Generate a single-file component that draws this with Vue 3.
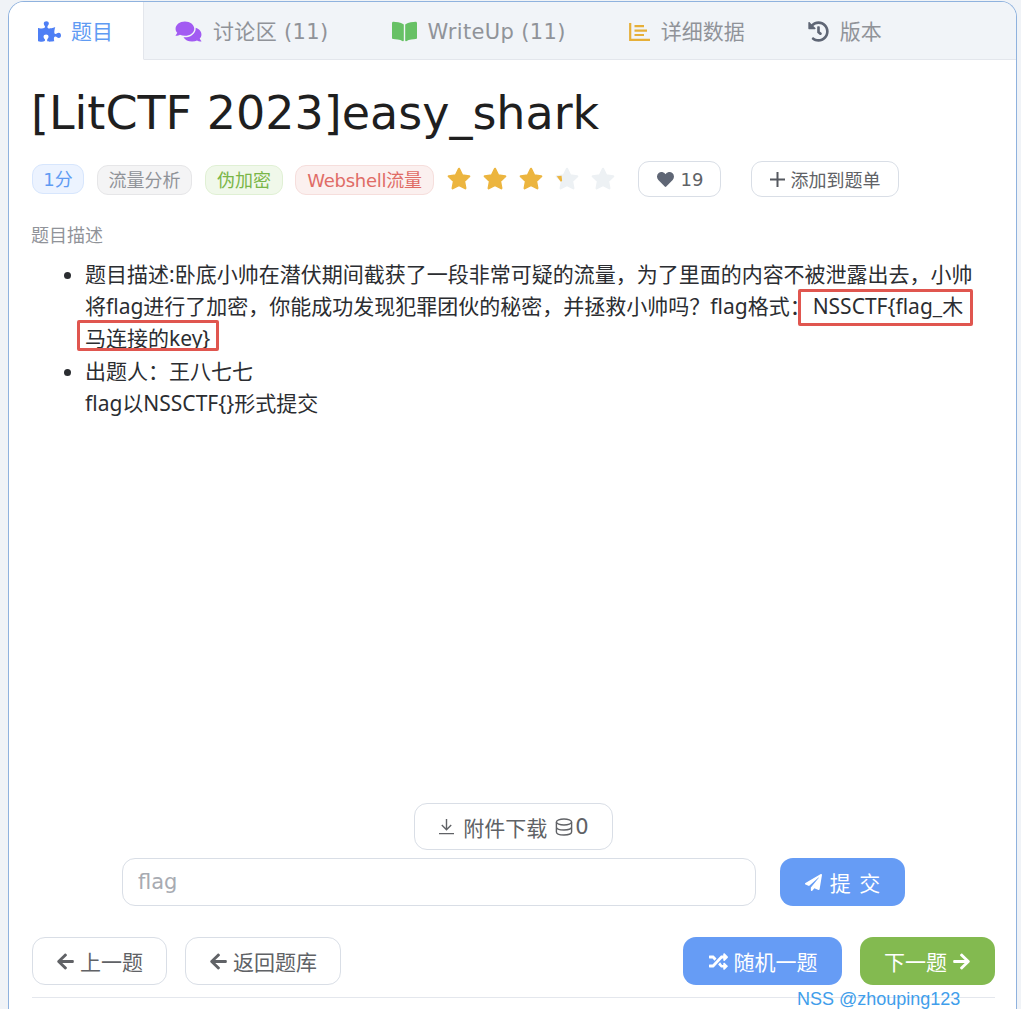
<script setup>
const d = {
  puzzle: 'M519.442 288.651c-41.519 0-59.5 31.593-82.058 31.593C377.409 320.244 432 144 432 144s-196.288 80-196.288-3.297c0-35.827 36.288-46.25 36.288-85.985C272 19.216 243.885 0 210.539 0c-34.654 0-66.366 18.891-66.366 56.346 0 41.364 31.711 59.277 31.711 81.75C175.885 207.719 0 166.758 0 166.758v333.237s178.635 41.047 178.635-28.662c0-22.473-40-40.107-40-81.471 0-37.456 29.25-56.346 63.577-56.346 33.673 0 61.788 19.216 61.788 54.717 0 39.735-36.288 50.158-36.288 85.985 0 60.803 129.675 25.73 181.23 25.73 0 0-34.725-120.101 25.827-120.101 35.962 0 46.423 36.152 86.308 36.152C556.712 416 576 387.99 576 354.443c0-34.199-18.962-65.792-56.558-65.792z',
  comments: 'M416 192c0-88.4-93.1-160-208-160S0 103.6 0 192c0 34.3 14.1 65.9 38 92-13.4 30.2-35.5 54.2-35.8 54.5-2.2 2.3-2.8 5.7-1.5 8.7S4.8 352 8 352c36.6 0 66.9-12.3 88.7-25 32.2 15.7 70.3 25 111.3 25 114.9 0 208-71.6 208-160zm122 220c23.9-26 38-57.7 38-92 0-66.9-53.5-124.2-129.3-148.1.9 6.6 1.3 13.3 1.3 20.1 0 105.9-107.7 192-240 192-10.8 0-21.3-.8-31.7-1.9C207.8 439.6 281.8 480 368 480c41 0 79.1-9.2 111.3-25 21.8 12.7 52.1 25 88.7 25 3.2 0 6.1-1.9 7.3-4.8 1.3-2.9.7-6.3-1.5-8.7-.3-.3-22.4-24.2-35.8-54.5z',
  book: 'M542.22 32.05c-54.8 3.11-163.72 14.43-230.96 55.59-4.64 2.84-7.27 7.89-7.27 13.17v363.87c0 11.55 12.63 18.85 23.28 13.49 69.18-34.82 169.23-44.32 218.7-46.92 16.89-.89 30.02-14.43 30.02-30.66V62.75c.01-17.71-15.35-31.74-33.77-30.7zM264.73 87.64C197.5 46.48 88.58 35.17 33.78 32.05 15.36 31.01 0 45.04 0 62.75V400.6c0 16.24 13.13 29.78 30.02 30.66 49.49 2.6 149.59 12.11 218.77 46.95 10.62 5.35 23.21-1.94 23.21-13.46V100.63c0-5.29-2.62-10.14-7.27-12.99z',
  history: 'M504 255.531c.253 136.64-111.18 248.372-247.82 248.468-59.015.042-113.223-20.53-155.822-54.911-11.077-8.94-11.905-25.541-1.839-35.607l11.267-11.267c8.609-8.609 22.353-9.551 31.891-1.984C173.062 425.135 212.781 440 256 440c101.705 0 184-82.311 184-184 0-101.705-82.311-184-184-184-48.814 0-93.149 18.969-126.068 49.932l50.754 50.754c10.08 10.08 2.941 27.314-11.313 27.314H24c-8.837 0-16-7.163-16-16V38.627c0-14.254 17.234-21.393 27.314-11.314l49.372 49.372C129.209 34.136 189.552 8 256 8c136.81 0 247.747 110.78 248 247.531zm-180.912 78.784l9.823-12.63c8.138-10.463 6.253-25.542-4.21-33.679L288 256.349V152c0-13.255-10.745-24-24-24h-16c-13.255 0-24 10.745-24 24v135.651l65.409 50.874c10.463 8.137 25.541 6.253 33.679-4.21z',
  heart: 'M462.3 62.6C407.5 15.9 326 24.3 275.7 76.2L256 96.5l-19.7-20.3C186.1 24.3 104.5 15.9 49.7 62.6c-62.8 53.6-66.1 149.8-9.9 207.9l193.5 199.8c12.5 12.9 32.8 12.9 45.3 0l193.5-199.8c56.3-58.1 53-154.3-9.8-207.9z',
  plane: 'M476 3.2L12.5 270.6c-18.1 10.4-15.8 35.6 2.2 43.2L121 358.4l287.3-253.2c5.5-4.9 13.3 2.6 8.6 8.3L176 407v80.5c0 23.6 28.5 32.9 42.5 15.8L282 426l124.6 52.2c14.2 6 30.4-2.9 33-18.2l72-432C515 7.8 493.3-6.8 476 3.2z',
  random: 'M504.971 359.029c9.373 9.373 9.373 24.569 0 33.941l-80 79.984c-15.01 15.01-40.971 4.49-40.971-16.971V416h-58.785a12.004 12.004 0 0 1-8.773-3.812l-70.556-75.596 53.333-57.143L352 352h32v-39.981c0-21.438 25.943-31.998 40.971-16.971l80 79.981zM12 176h84l52.781 56.551 53.333-57.143-70.556-75.596A11.999 11.999 0 0 0 122.785 96H12c-6.627 0-12 5.373-12 12v56c0 6.627 5.373 12 12 12zm372 0v39.984c0 21.46 25.961 31.98 40.971 16.971l80-79.984c9.373-9.373 9.373-24.569 0-33.941l-80-79.981C409.943 24.021 384 34.582 384 56.019V96h-58.785a12.004 12.004 0 0 0-8.773 3.812L96 336H12c-6.627 0-12 5.373-12 12v56c0 6.627 5.373 12 12 12h110.785c3.326 0 6.503-1.381 8.773-3.812L352 176h32z',
  left: 'M257.5 445.1l-22.2 22.2c-9.4 9.4-24.6 9.4-33.9 0L7 273c-9.4-9.4-9.4-24.6 0-33.9L201.4 44.7c9.4-9.4 24.6-9.4 33.9 0l22.2 22.2c9.5 9.5 9.3 25-.4 34.3L136.6 216H424c13.3 0 24 10.7 24 24v32c0 13.3-10.7 24-24 24H136.6l120.5 114.8c9.8 9.3 10 24.8.4 34.3z',
  right: 'M190.5 66.9l22.2-22.2c9.4-9.4 24.6-9.4 33.9 0L441 239c9.4 9.4 9.4 24.6 0 33.9L246.6 467.3c-9.4 9.4-24.6 9.4-33.9 0l-22.2-22.2c-9.5-9.5-9.3-25 .4-34.3L311.4 296H24c-13.3 0-24-10.7-24-24v-32c0-13.3 10.7-24 24-24h287.4L190.9 101.2c-9.8-9.3-10-24.8-.4-34.3z'
}
const tabs = [
  { label: '题目', icon: d.puzzle, vb: '0 0 576 512', color: '#4e7ff5', w: 23, active: true },
  { label: '讨论区 (11)', icon: d.comments, vb: '0 0 576 512', color: '#a25bf2', w: 27, wide: true },
  { label: 'WriteUp (11)', icon: d.book, vb: '0 0 576 512', color: '#67c165', w: 25, wide: true },
  { label: '详细数据', chart: true, color: '#e6af38', w: 21 },
  { label: '版本', icon: d.history, vb: '0 0 512 512', color: '#5f6675', w: 21 }
]
const tags = [
  { t: '1分', c: 'blue' },
  { t: '流量分析', c: 'gray' },
  { t: '伪加密', c: 'green' },
  { t: 'Webshell流量', c: 'red' }
]
const star = 'M12 2.6l2.9 6 6.6.9-4.8 4.6 1.2 6.5L12 17.5l-5.9 3.1 1.2-6.5L2.5 9.5l6.6-.9z'
</script>

<template>
  <div class="card">
    <nav class="tabs">
      <div v-for="tab in tabs" :key="tab.label" class="tab" :class="{ active: tab.active }">
        <svg v-if="tab.chart" class="ticon" :width="tab.w" height="18" viewBox="0 0 21 18" fill="none" :stroke="tab.color" stroke-width="2.200">
          <path d="M1.200 0v16.800h19.800M5.500 3.200h9.500M5.500 7.600h12.500M5.500 12h9.500" />
        </svg>
        <svg v-else class="ticon" :width="tab.w" height="23" :viewBox="tab.vb" :fill="tab.color"><path :d="tab.icon" /></svg>
        <span class="tlabel" :class="{ wide: tab.wide }">{{ tab.label }}</span>
      </div>
      <div class="tabfill"></div>
    </nav>

    <main class="content">
      <h1>[LitCTF 2023]easy_shark</h1>

      <div class="meta">
        <span v-for="tag in tags" :key="tag.t" class="tag" :class="tag.c">{{ tag.t }}</span>
        <div class="stars">
          <svg v-for="n in 5" :key="n" width="26" height="26" viewBox="0 0 24 24" stroke-linejoin="round" stroke-width="2"
            :class="n <= 3 ? 'on' : 'off'"><path :d="star" /><path v-if="n === 4" class="sliver" d="M2.500 9.500l4.500-.6 .5 5-1.200.7z" /></svg>
        </div>
        <button class="btn small like">
          <svg width="19" height="17" viewBox="0 0 512 512" fill="#5f6675"><path :d="d.heart" /></svg>19
        </button>
        <button class="btn small add">
          <svg width="15" height="15" viewBox="0 0 15 15" stroke="#55585f" stroke-width="2"><path d="M7.500 0v15M0 7.500h15" /></svg>添加到题单
        </button>
      </div>

      <div class="label">题目描述</div>

      <div class="desc">
        <ul>
          <li>题目描述:卧底小帅在潜伏期间截获了一段非常可疑的流量，为了里面的内容不被泄露出去，小帅将flag进行了加密，你能成功发现犯罪团伙的秘密，并拯救小帅吗？flag格式： NSSCTF{flag_木马连接的key}</li>
          <li>出题人：王八七七<br />flag以NSSCTF{}形式提交</li>
        </ul>
        <i class="mark m1"></i>
        <i class="mark m2"></i>
      </div>

      <div class="attach">
        <button class="btn big dl">
          <svg width="17" height="17" viewBox="0 0 17 17" fill="none" stroke="#606266" stroke-width="1.4"><path d="M8.500 1v10.500M3.800 7l4.700 4.700L13.200 7M1 15.600h15" /></svg>
          <span>附件下载</span>
          <svg width="18" height="18" viewBox="0 0 18 18" fill="none" stroke="#606266" stroke-width="1.4"><ellipse cx="9" cy="4" rx="7.600" ry="3" /><path d="M1.400 4v10c0 1.700 3.400 3 7.600 3s7.600-1.300 7.600-3V4M1.400 9c0 1.700 3.400 3 7.600 3s7.600-1.300 7.600-3" /></svg><span class="zero">0</span>
        </button>
      </div>

      <div class="submit-row">
        <input class="flag" placeholder="flag" />
        <button class="btn big solid primary submit">
          <svg width="17" height="17" viewBox="0 0 512 512" fill="#fff"><path :d="d.plane" /></svg>提 交
        </button>
      </div>

      <div class="nav-row">
        <button class="btn big prev"><svg width="19" height="19" viewBox="0 0 448 512" fill="#606266"><path :d="d.left" /></svg>上一题</button>
        <button class="btn big back"><svg width="19" height="19" viewBox="0 0 448 512" fill="#606266"><path :d="d.left" /></svg>返回题库</button>
        <div class="spacer"></div>
        <button class="btn big solid primary rand"><svg width="21" height="19" viewBox="0 0 512 512" fill="#fff"><path :d="d.random" /></svg>随机一题</button>
        <button class="btn big solid success next">下一题<svg width="19" height="19" viewBox="0 0 448 512" fill="#fff"><path :d="d.right" /></svg></button>
      </div>
      <hr class="rule" />
    </main>
    <div class="watermark">NSS @zhouping123</div>
  </div>
</template>

<style scoped>
.card {
  position: relative;
  box-sizing: border-box;
  width: 1009px;
  height: 1008px;
  margin: 1px 0 0 8px;
  background: #fff;
  border: 1px solid #8fb2de;
  border-bottom: 0;
  border-radius: 16px 16px 0 0;
  overflow: hidden;
  display: flex;
  flex-direction: column;
  font-family: "DejaVu Sans", "Noto Sans CJK SC", sans-serif;
}
.tabs {
  display: flex;
  height: 58px;
  flex: none;
}
.tab {
  display: flex;
  align-items: center;
  gap: 11px;
  background: #f1f4f8;
  border-bottom: 1px solid #e3e6ec;
  color: #909399;
  font-size: 21px;
  padding: 2px 31px 0 32px;
}
.tlabel { line-height: 30px; }
.tlabel.wide { letter-spacing: 0.35px; }
.tab:nth-child(1) { width: 135px; padding-left: 29px; padding-right: 0; box-sizing: border-box; gap: 10px; }
.tab:nth-child(2) { padding-left: 31px; }
.tab.active {
  background: #fff;
  color: #5f9bf3;
  border-bottom-color: #fff;
  border-right: 1px solid #e3e6ec;
}
.tabfill {
  flex: 1;
  background: #f1f4f8;
  border-bottom: 1px solid #e3e6ec;
}
.content {
  flex: 1;
  min-height: 0;
  display: flex;
  flex-direction: column;
  padding: 0 22px;
}
h1 {
  margin: 23px 0 0;
  font-size: 46px;
  line-height: 60px;
  font-weight: 400;
  color: #1f1f1f;
}
.meta {
  display: flex;
  align-items: center;
  margin-top: 18px;
  height: 36px;
  padding-left: 1px;
}
.tag {
  box-sizing: border-box;
  height: 30px;
  border: 1px solid;
  border-radius: 11px;
  font-size: 18px;
  line-height: 30px;
  padding: 0;
  margin-top: 2px;
  margin-right: 13px;
  text-align: center;
  white-space: nowrap;
}
.tag.blue { background: #ecf3ff; border-color: #d7e6fd; color: #5f9bf3; width: 52px; margin-top: 0; }
.tag.gray { background: #f4f4f5; border-color: #e6e6e8; color: #909399; width: 95px; }
.tag.green { background: #f0f8ea; border-color: #e0f0d4; color: #7ab648; width: 78px; margin-right: 12px; }
.tag.red { background: #fbf0ef; border-color: #f6dedc; color: #e06c66; width: 139px; margin-right: 0; letter-spacing: -0.25px; }
.stars {
  display: flex;
  gap: 10px;
  margin-left: 12px;
}
.stars .on { fill: #ecb53f; stroke: #ecb53f; }
.stars .off { fill: #edf1f4; stroke: #edf1f4; }
.stars .sliver { fill: #ecb53f; stroke: none; }
.btn {
  display: inline-flex;
  align-items: center;
  justify-content: center;
  box-sizing: border-box;
  background: #fff;
  border: 1px solid #d9dee6;
  color: #606266;
  font-family: inherit;
  padding: 0;
  cursor: pointer;
  white-space: nowrap;
}
.small { height: 36px; border-radius: 11px; font-size: 18px; gap: 6px; }
.like { width: 83px; margin-left: 22px; }
.add { width: 148px; margin-left: 30px; }
.label {
  margin-top: 24px;
  font-size: 18px;
  line-height: 30px;
  color: #909399;
}
.desc {
  position: relative;
  flex: 1;
  min-height: 0;
  margin-top: 7px;
  font-family: "Noto Sans", "Noto Sans CJK SC", sans-serif;
  font-size: 21px;
  line-height: 32px;
  word-spacing: -3.5px;
  color: #2b2d31;
}
ul { margin: 0; padding: 0 0 0 54px; width: 895px; }
li + li { margin-top: 1px; }
.mark {
  position: absolute;
  box-sizing: border-box;
  border: 3px solid #e0564f;
  border-radius: 2px;
}
.m1 { left: 767px; top: 31px; width: 175px; height: 37px; }
.m2 { left: 46px; top: 62px; width: 142px; height: 31px; }
.attach { display: flex; justify-content: center; padding-left: 2px; height: 47px; }
.big { height: 48px; border-radius: 13px; font-size: 21px; }
.attach .big { height: 47px; }
.dl { width: 199px; gap: 8px; }
.zero { margin-left: -6px; }
.submit-row {
  display: flex;
  margin-top: 8px;
  padding-left: 91px;
}
.flag {
  box-sizing: border-box;
  width: 634px;
  height: 48px;
  border: 1px solid #d9dee6;
  border-radius: 13px;
  font-size: 21px;
  font-family: inherit;
  padding: 0 15px;
  outline: none;
  color: #303133;
}
.flag::placeholder { color: #a8abb2; }
.submit { width: 125px; margin-left: 24px; gap: 8px; word-spacing: 2px; }
.solid { color: #fff; border: 0; }
.primary { background: #669cf5; }
.success { background: #83ba50; }
.nav-row {
  display: flex;
  margin-top: 31px;
  margin-left: 1px;
  margin-right: -1px;
}
.nav-row .btn { gap: 5px; }
.prev { width: 135px; }
.back { width: 156px; margin-left: 18px; }
.spacer { flex: 1; }
.rand { width: 159px; }
.next { width: 135px; margin-left: 18px; }
.rule {
  margin: 12px -1px 11px 1px;
  border: 0;
  border-top: 1px solid #e4e7ed;
}
.watermark {
  position: absolute;
  left: 788px;
  top: 986px;
  font-family: "Liberation Sans", sans-serif;
  font-size: 18px;
  line-height: 22px;
  color: #409eeb;
}
</style>

<style>
body { background: #f0f3f7; }
</style>
